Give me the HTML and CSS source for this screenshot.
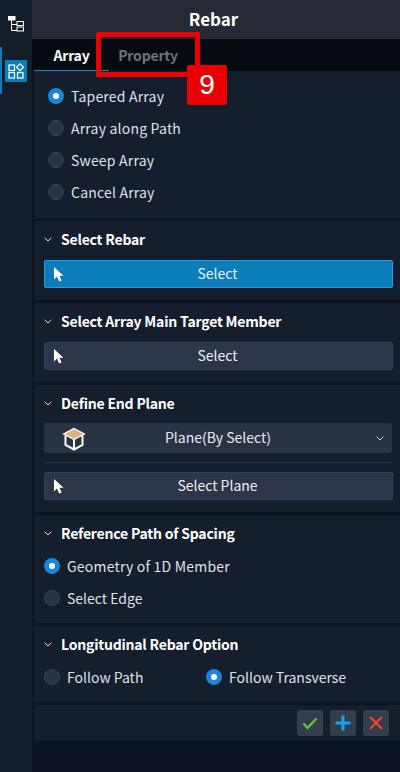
FILE: index.html
```html
<!DOCTYPE html>
<html lang="en">
<head>
<meta charset="utf-8">
<title>Rebar</title>
<link rel="stylesheet" href="styles.css">
</head>
<body>
<div class="app">
  <nav class="rail">
    <button class="rail-btn">
      <svg width="16" height="16" viewBox="0 0 16 16" fill="none" stroke="#fff" stroke-width="1"><rect x="0" y="0" width="7.500" height="4.500" fill="#fff" stroke="none"/><path d="M3.500 4v10.500h5.500M3.500 8.500h5.500"/><rect x="9" y="5.500" width="6.500" height="4"/><rect x="9" y="11" width="6.500" height="4"/></svg>
    </button>
    <button class="rail-btn active">
      <svg class="rail-icon" width="16" height="16" viewBox="0 0 16 16" fill="none" stroke="#fff" stroke-width="1.2"><rect x="1" y="2" width="5.500" height="5.500"/><path d="M12 .8l3.400 3.400L12 7.600 8.600 4.200z"/><rect x="1" y="9.500" width="5.500" height="5.500"/><rect x="9.500" y="9.500" width="5.500" height="5.500"/></svg>
    </button>
  </nav>
  <main class="panel">
    <header class="title">Rebar</header>
    <div class="tabs">
      <div class="tab on">Array</div>
      <div class="tab">Property</div>
      <div class="callout"><span class="callout-box"></span><span class="callout-num">9</span></div>
    </div>
    <section class="sec first">
      <div class="radio-row"><i class="radio on"></i>Tapered Array</div>
      <div class="radio-row"><i class="radio"></i>Array along Path</div>
      <div class="radio-row"><i class="radio"></i>Sweep Array</div>
      <div class="radio-row"><i class="radio"></i>Cancel Array</div>
    </section>
    <section class="sec s2">
      <h2><svg class="chev" width="8" height="5" viewBox="0 0 8 5"><path d="M.7.7L4 4 7.300.7" fill="none" stroke="#dfe4ea"/></svg>Select Rebar</h2>
      <button class="btn blue"><svg class="cur" width="10" height="15" viewBox="0 0 10 15"><path d="M0 0v12.500l3-3 2.200 5 2.400-1-2.100-4.700h4z" fill="#fff"/></svg>Select</button>
    </section>
    <section class="sec s3">
      <h2><svg class="chev" width="8" height="5" viewBox="0 0 8 5"><path d="M.7.7L4 4 7.300.7" fill="none" stroke="#dfe4ea"/></svg>Select Array Main Target Member</h2>
      <button class="btn"><svg class="cur" width="10" height="15" viewBox="0 0 10 15"><path d="M0 0v12.500l3-3 2.200 5 2.400-1-2.100-4.700h4z" fill="#fff"/></svg>Select</button>
    </section>
    <section class="sec s4">
      <h2><svg class="chev" width="8" height="5" viewBox="0 0 8 5"><path d="M.7.7L4 4 7.300.7" fill="none" stroke="#dfe4ea"/></svg>Define End Plane</h2>
      <div class="select">
        <svg class="box" width="24" height="24" viewBox="0 0 24 24"><path d="M12 1.500L22.500 7 12 12.500 1.500 7z" fill="#dcb483" stroke="#fff" stroke-width="1.200"/><path d="M3.500 8.500v9.500l8.500 4.500 8.500-4.500V8.500M12 12.500v10" fill="none" stroke="#fff" stroke-width="2"/></svg>
        <span>Plane(By Select)</span>
        <svg class="sel-chev" width="8" height="5" viewBox="0 0 8 5"><path d="M.7.7L4 4 7.300.7" fill="none" stroke="#c9ced6"/></svg>
      </div>
      <hr>
      <button class="btn"><svg class="cur" width="10" height="15" viewBox="0 0 10 15"><path d="M0 0v12.500l3-3 2.200 5 2.400-1-2.100-4.700h4z" fill="#fff"/></svg>Select Plane</button>
    </section>
    <section class="sec s5">
      <h2><svg class="chev" width="8" height="5" viewBox="0 0 8 5"><path d="M.7.7L4 4 7.300.7" fill="none" stroke="#dfe4ea"/></svg>Reference Path of Spacing</h2>
      <div class="radio-row"><i class="radio on"></i>Geometry of 1D Member</div>
      <div class="radio-row edge"><i class="radio"></i>Select Edge</div>
    </section>
    <section class="sec s6">
      <h2><svg class="chev" width="8" height="5" viewBox="0 0 8 5"><path d="M.7.7L4 4 7.300.7" fill="none" stroke="#dfe4ea"/></svg>Longitudinal Rebar Option</h2>
      <div class="cols">
        <div class="radio-row"><i class="radio"></i>Follow Path</div>
        <div class="radio-row"><i class="radio on"></i>Follow Transverse</div>
      </div>
    </section>
    <footer class="actions">
      <button class="act"><svg width="16" height="14" viewBox="0 0 16 14"><path d="M1.500 7.500l4 4.500 9-9.500" fill="none" stroke="#62c43d" stroke-width="2.200"/></svg></button>
      <button class="act"><svg width="16" height="16" viewBox="0 0 16 16"><path d="M8 .5v15M.5 8h15" fill="none" stroke="#10a8f2" stroke-width="3"/></svg></button>
      <button class="act"><svg width="14" height="14" viewBox="0 0 14 14"><path d="M1 1l12 12M13 1L1 13" fill="none" stroke="#f0452c" stroke-width="2.200"/></svg></button>
    </footer>
  </main>
</div>
</body>
</html>
```
FILE: styles.css
```css
* { box-sizing: border-box; }
html, body { margin: 0; height: 100%; background: #0b1420; }
body { font-family: "Noto Sans CJK KR", "Noto Sans", sans-serif; font-size: 14px; color: #e8ebef; overflow: hidden; }
button { font: inherit; color: inherit; }
.app { display: flex; height: 772px; }
.rail { width: 32px; background: #141d2a; padding-top: 13px; display: flex; flex-direction: column; gap: 12px; }
.rail-btn { width: 32px; height: 22px; margin: 0; padding: 0; border: 0; background: none; display: flex; align-items: center; justify-content: center; }
.rail-btn.active { height: 47px; width: 29px; border-left: 2px solid #0b7dbb; padding-left: 3px; justify-content: flex-start; }
.rail-icon { background: #0b7dbb; width: 22px; height: 22px; padding: 3px; }
.panel { flex: 1; min-width: 0; display: flex; flex-direction: column; }
.title { height: 39px; background: #252a35; text-align: center; font-size: 17px; font-weight: 700; color: #fff; line-height: 37px; padding-right: 5px; }
.tabs { position: relative; height: 32px; background: #060b12; display: flex; padding-left: 2px; }
.tab { width: 78px; text-align: center; line-height: 32px; font-weight: 700; font-size: 14px; color: #6f7377; letter-spacing: -0.2px; }
.tab.on { width: 75px; color: #fff; border-bottom: 1px solid #1585d0; }
.callout { position: absolute; left: 64px; top: -7px; }
.callout-box { position: absolute; left: 0; top: 0; width: 104px; height: 45px; border: 5px solid #ea0000; }
.callout-num { position: absolute; left: 91px; top: 33px; width: 40px; height: 40px; background: #ea0000; border-radius: 2px; color: #fff; font: 28px/40px "Liberation Sans", sans-serif; text-align: center; }
.sec { background: #141e2c; padding: 8px 7px 0 10px; margin: 0 0 3px 2px; }
.first { height: 147px; padding: 9px 0 0 14px; }
h2 { margin: 0; display: flex; align-items: center; font-size: 14px; font-weight: 700; color: #fff; height: 20px; letter-spacing: -0.2px; }
.chev { margin: 0 9px 0 0; flex: none; }
.radio-row { display: flex; align-items: center; height: 32px; color: #dfe3e8; letter-spacing: 0.2px; }
.cols .radio-row, .edge { letter-spacing: 0; }
.radio { width: 16px; height: 16px; border-radius: 50%; background: #2a3340; border: 1px solid #39424f; margin-right: 7px; flex: none; }
.radio.on { background: #fff; border: 5px solid #1b86d9; }
.btn { display: flex; justify-content: center; align-items: center; position: relative; width: 349px; height: 28px; padding: 0 2px 2px 0; background: #2d3648; border: 1px solid #364052; border-radius: 2px; color: #eef0f3; }
.btn.blue { background: #0b7db8; border-color: #2a9be0; }
.cur { position: absolute; left: 9px; top: 6px; }
.s2, .s3, .s4 { height: 79px; }
.s2 h2, .s3 h2, .s4 h2 { margin-bottom: 11px; }
.s5 h2, .s6 h2 { margin-bottom: 7px; }
.s4 { height: 127px; }
.select { display: flex; align-items: center; justify-content: center; position: relative; width: 348px; height: 30px; padding-bottom: 2px; background: #2a3344; border-radius: 2px; margin-top: -1px; }
.box { position: absolute; left: 18px; top: 4px; }
.sel-chev { position: absolute; right: 8px; top: 13px; }
hr { width: 348px; margin: 9px 0; border: 0; border-top: 1px solid #2d3644; }
.s5 { height: 108px; }
.s6 { height: 76px; }
.cols { display: grid; grid-template-columns: 162px 1fr; }
.actions { height: 36px; margin-left: 2px; background: #141e2c; display: flex; justify-content: flex-end; align-items: center; gap: 7px; padding-right: 11px; }
.act { width: 26px; height: 26px; padding: 0; background: #343d4d; border: 0; border-radius: 3px; display: flex; align-items: center; justify-content: center; }
```
